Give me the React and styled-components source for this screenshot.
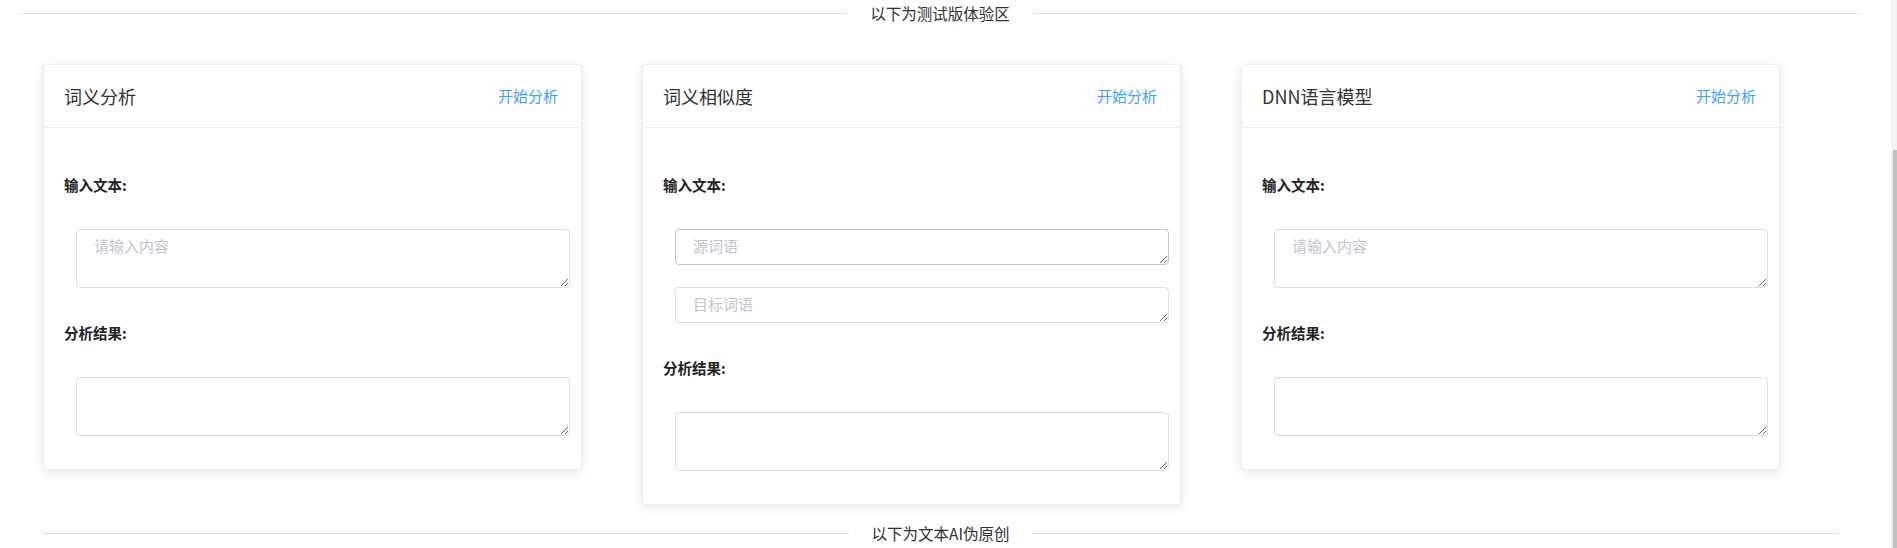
import styled, { createGlobalStyle } from "styled-components"

const GlobalStyle = createGlobalStyle`
  html, body {
    margin: 0;
    padding: 0;
    background: #fff;
    overflow: hidden;
  }
  body {
    font-family: "Noto Sans CJK SC", "Noto Sans", "Liberation Sans", sans-serif;
    color: #303133;
  }
  * {
    box-sizing: border-box;
  }
`

const Page = styled.div`
  display: flex;
  height: 100vh;
  width: 100%;
`

const Main = styled.main`
  flex: 1;
  padding: 0 31px 0 20px;
`

const ScrollTrack = styled.div`
  width: 6px;
  display: flex;
  flex-direction: column;
  align-items: flex-end;
  padding-top: 150px;
  background: #f1f1f1;
`

const ScrollThumb = styled.div`
  flex: 1;
  width: 4px;
  background: #c1c1c1;
`

const Divider = styled.div`
  display: flex;
  align-items: center;
  height: 27px;
  margin: ${(p) => p.$margin || "0"};
`

const Line = styled.div`
  flex: 1;
  height: 1px;
  background: #dcdfe6;
`

const DividerText = styled.span`
  padding: 0 23px;
  font-size: 15.5px;
  line-height: 27px;
  color: #303133;
`

const CardRow = styled.div`
  display: flex;
  align-items: flex-start;
  gap: 60px;
  margin-top: 37px;
  padding-left: 23px;
`

const Card = styled.section`
  width: 539px;
  background: #fff;
  border: 1px solid #ebeef5;
  border-radius: 4px;
  box-shadow: 0 2px 12px 0 rgba(0, 0, 0, 0.1);
`

const CardHeader = styled.header`
  display: flex;
  align-items: center;
  justify-content: space-between;
  padding: 18px 20px;
  border-bottom: 1px solid #ebeef5;
`

const CardTitle = styled.span`
  font-size: 18px;
  line-height: 26px;
  color: #303133;
`

const ActionLink = styled.a`
  font-size: 15px;
  line-height: 26px;
  color: #409eff;
  cursor: pointer;
  margin-right: 3px;
`

const CardBody = styled.div`
  padding: 37px 11px 33px 20px;
`

const Label = styled.div`
  font-size: 14.5px;
  font-weight: 700;
  line-height: 40px;
  color: #222;
  margin-top: ${(p) => (p.$first ? "0" : "25px")};
`

const Fields = styled.div`
  display: flex;
  flex-direction: column;
  gap: 22px;
  margin: 24px 0 0 12px;
`

const TextArea = styled.textarea`
  display: block;
  width: 100%;
  height: ${(p) => (p.$rows === 1 ? "36px" : "59px")};
  padding: 5px 17px;
  font-family: inherit;
  font-size: 15px;
  line-height: 22px;
  color: #606266;
  background: #fff;
  border: 1px solid ${(p) => (p.$hover ? "#c0c4cc" : "#dcdfe6")};
  border-radius: 4px;
  resize: vertical;
  outline: none;

  &::placeholder {
    color: #c0c4cc;
  }
`

const cards = [
  { title: "词义分析", inputs: [{ placeholder: "请输入内容", rows: 2 }] },
  {
    title: "词义相似度",
    inputs: [
      { placeholder: "源词语", rows: 1, hover: true },
      { placeholder: "目标词语", rows: 1 },
    ],
  },
  { title: "DNN语言模型", inputs: [{ placeholder: "请输入内容", rows: 2 }] },
]

const AnalysisCard = ({ title, inputs }) => (
  <Card>
    <CardHeader>
      <CardTitle>{title}</CardTitle>
      <ActionLink>开始分析</ActionLink>
    </CardHeader>
    <CardBody>
      <Label $first>输入文本:</Label>
      <Fields>
        {inputs.map((input) => (
          <TextArea
            key={input.placeholder}
            placeholder={input.placeholder}
            $rows={input.rows}
            $hover={input.hover}
          />
        ))}
      </Fields>
      <Label>分析结果:</Label>
      <Fields>
        <TextArea $rows={2} />
      </Fields>
    </CardBody>
  </Card>
)

export default function App() {
  return (
    <>
      <GlobalStyle />
      <Page>
        <Main>
          <Divider>
            <Line />
            <DividerText>以下为测试版体验区</DividerText>
            <Line />
          </Divider>
          <CardRow>
            {cards.map((card) => (
              <AnalysisCard key={card.title} {...card} />
            ))}
          </CardRow>
          <Divider $margin="15px 21px 0 22px">
            <Line />
            <DividerText>以下为文本AI伪原创</DividerText>
            <Line />
          </Divider>
        </Main>
        <ScrollTrack>
          <ScrollThumb />
        </ScrollTrack>
      </Page>
    </>
  )
}
